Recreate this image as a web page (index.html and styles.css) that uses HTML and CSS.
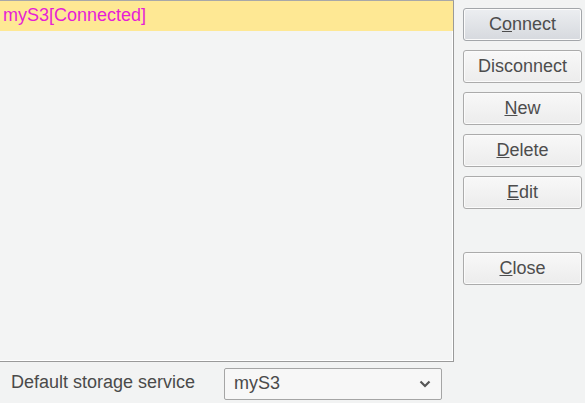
FILE: index.html
```html
<!DOCTYPE html>
<html>
<head>
<meta charset="utf-8">
<link rel="stylesheet" href="styles.css">
</head>
<body>
<div class="top">
  <div class="list">
    <div class="row selected">myS3[Connected]</div>
  </div>
  <div class="buttons">
    <button class="btn default">C<u>o</u>nnect</button>
    <button class="btn">Disconnect</button>
    <button class="btn"><u>N</u>ew</button>
    <button class="btn"><u>D</u>elete</button>
    <button class="btn"><u>E</u>dit</button>
    <button class="btn close"><u>C</u>lose</button>
  </div>
</div>
<div class="footer">
  <span class="label">Default storage service</span>
  <div class="combo">
    <span class="value">myS3</span>
    <svg class="chev" width="12" height="8" viewBox="0 0 12 8"><polyline points="1.5,1.5 6,6 10.5,1.5" fill="none" stroke="#555" stroke-width="2.2"/></svg>
  </div>
</div>
</body>
</html>
```
FILE: styles.css
```css
html, body {
  margin: 0;
  padding: 0;
  background: #f2f3f3;
  font-family: "Liberation Sans", Arial, sans-serif;
  font-size: 18px;
  color: #4a4a4a;
}
.top {
  display: flex;
  height: 362px;
}
.list {
  width: 454px;
  box-sizing: border-box;
  border-top: 1px solid #a8a8a8;
  border-right: 1px solid #9a9a9a;
  border-bottom: 1px solid #9a9a9a;
  box-shadow: inset -1px -1px 0 #ffffff;
  background: #f3f4f4;
}
.row {
  height: 30px;
  line-height: 29px;
  padding-left: 3px;
}
.row.selected {
  background: #fee894;
  color: #e61ed6;
}
.buttons {
  display: flex;
  flex-direction: column;
  gap: 9px;
  padding: 8px 0 0 9px;
}
.btn {
  width: 119px;
  height: 33px;
  box-sizing: border-box;
  border: 1px solid #ababab;
  border-radius: 3px;
  background: linear-gradient(#f8f8f8, #ececec);
  font-family: "Liberation Sans", Arial, sans-serif;
  font-size: 18px;
  color: #4d4d4d;
  padding: 0;
  box-shadow: inset 0 0 0 1px #fbfbfb;
}
.btn.default {
  background: linear-gradient(#eceef1, #d6d9de);
  border-color: #a3a6aa;
}
.btn.close {
  margin-top: 34px;
}
.footer {
  display: flex;
  align-items: center;
  height: 41px;
  padding-left: 11px;
}
.label {
  color: #4a4a4a;
  width: 213px;
}
.combo {
  display: flex;
  align-items: center;
  justify-content: space-between;
  width: 218px;
  height: 32px;
  box-sizing: border-box;
  border: 1px solid #a5a5a5;
  border-radius: 2px;
  background: #f7f7f7;
  padding: 0 10px 0 9px;
  margin-top: 2px;
}
.value {
  color: #4a4a4a;
}
```
